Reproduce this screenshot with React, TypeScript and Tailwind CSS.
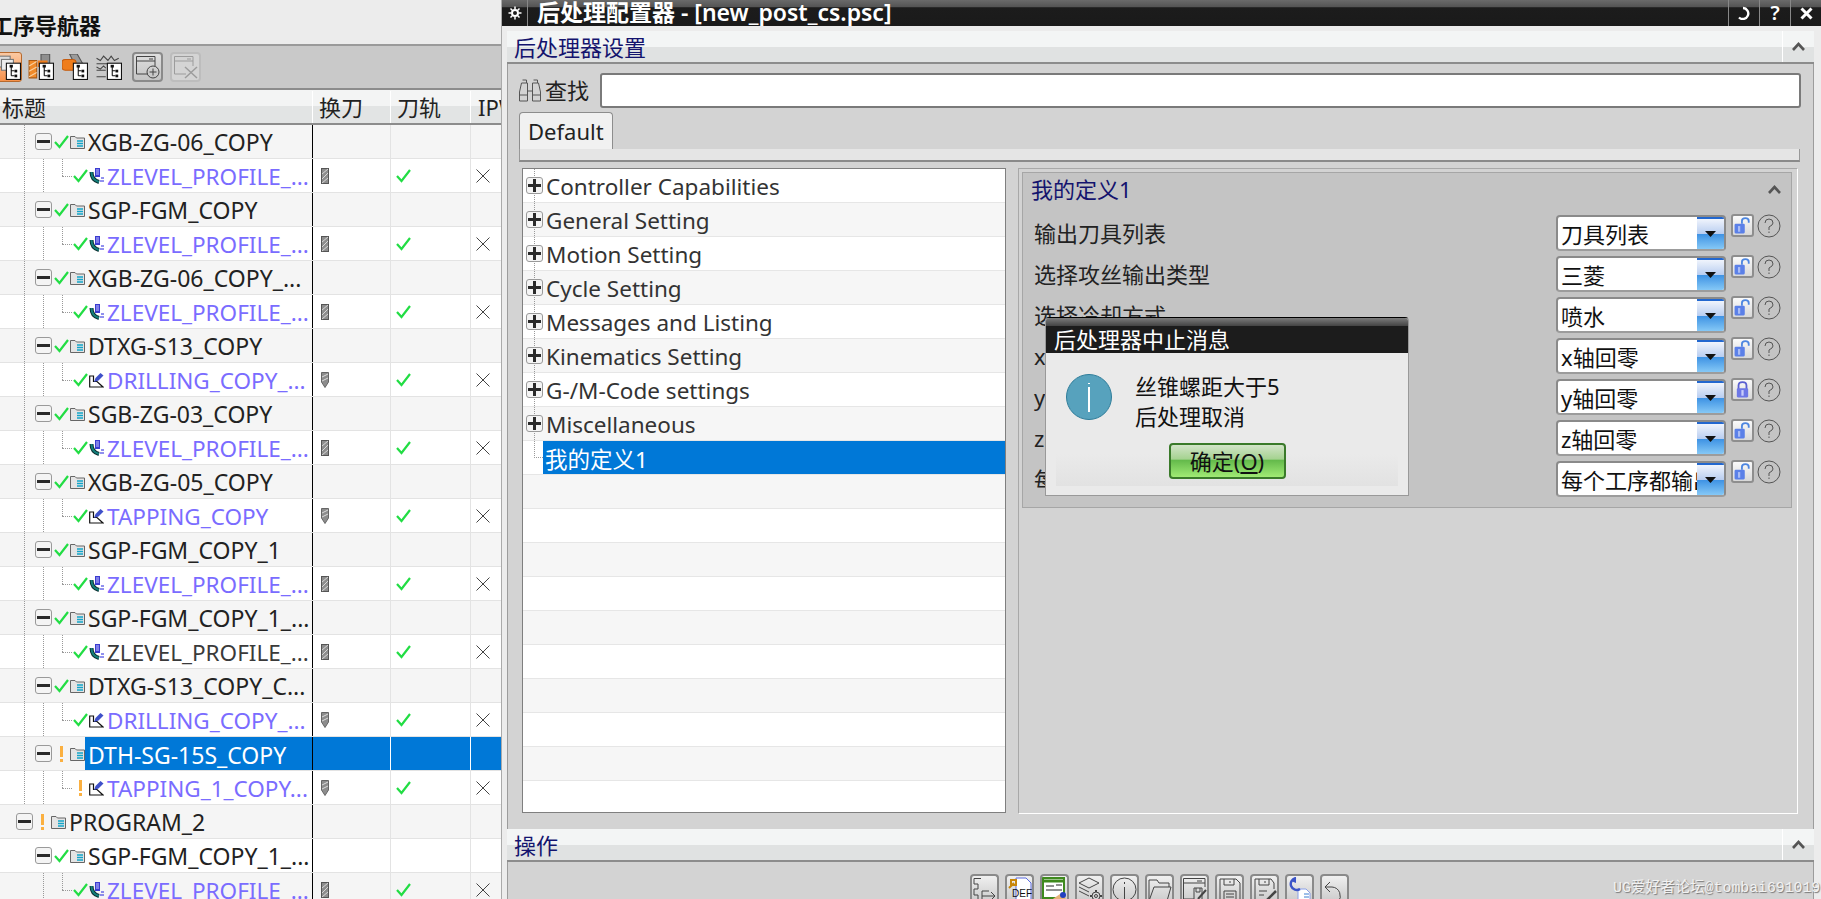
import type { ReactNode } from 'react';

const FONT = "font-['Noto_Sans','Noto_Sans_CJK_SC',sans-serif]";

type Row = {
  label: string;
  kind: 'group' | 'op' | 'root';
  op?: 'mill' | 'drill';
  status?: 'ok' | 'warn';
  dark?: boolean;
  selected?: boolean;
};

const navRows: Row[] = [
  { label: 'XGB-ZG-06_COPY', kind: 'group' },
  { label: 'ZLEVEL_PROFILE_...', kind: 'op', op: 'mill' },
  { label: 'SGP-FGM_COPY', kind: 'group' },
  { label: 'ZLEVEL_PROFILE_...', kind: 'op', op: 'mill' },
  { label: 'XGB-ZG-06_COPY_...', kind: 'group' },
  { label: 'ZLEVEL_PROFILE_...', kind: 'op', op: 'mill' },
  { label: 'DTXG-S13_COPY', kind: 'group' },
  { label: 'DRILLING_COPY_...', kind: 'op', op: 'drill' },
  { label: 'SGB-ZG-03_COPY', kind: 'group' },
  { label: 'ZLEVEL_PROFILE_...', kind: 'op', op: 'mill' },
  { label: 'XGB-ZG-05_COPY', kind: 'group' },
  { label: 'TAPPING_COPY', kind: 'op', op: 'drill' },
  { label: 'SGP-FGM_COPY_1', kind: 'group' },
  { label: 'ZLEVEL_PROFILE_...', kind: 'op', op: 'mill' },
  { label: 'SGP-FGM_COPY_1_...', kind: 'group' },
  { label: 'ZLEVEL_PROFILE_...', kind: 'op', op: 'mill', dark: true },
  { label: 'DTXG-S13_COPY_C...', kind: 'group' },
  { label: 'DRILLING_COPY_...', kind: 'op', op: 'drill' },
  { label: 'DTH-SG-15S_COPY', kind: 'group', status: 'warn', selected: true },
  { label: 'TAPPING_1_COPY...', kind: 'op', op: 'drill', status: 'warn' },
  { label: 'PROGRAM_2', kind: 'root', status: 'warn' },
  { label: 'SGP-FGM_COPY_1_...', kind: 'group' },
  { label: 'ZLEVEL_PROFILE_...', kind: 'op', op: 'mill' },
];

const treeItems = [
  'Controller Capabilities',
  'General Setting',
  'Motion Setting',
  'Cycle Setting',
  'Messages and Listing',
  'Kinematics Setting',
  'G-/M-Code settings',
  'Miscellaneous',
];

const settings = [
  { label: '输出刀具列表', value: '刀具列表' },
  { label: '选择攻丝输出类型', value: '三菱' },
  { label: '选择冷却方式', value: '喷水' },
  { label: 'x轴回零方式', value: 'x轴回零' },
  { label: 'y轴回零方式', value: 'y轴回零', locked: true },
  { label: 'z轴回零方式', value: 'z轴回零' },
  { label: '每个工序输出', value: '每个工序都输出' },
];

function Check({ size = 15 }: { size?: number }) {
  return (
    <svg width={size} height={size} viewBox="0 0 15 15" className="shrink-0">
      <path d="M1 8 L5.5 13 L14 2" fill="none" stroke="#22dd44" strokeWidth="2.2" />
    </svg>
  );
}

function Status({ status }: { status?: 'ok' | 'warn' }) {
  if (status === 'warn') {
    return (
      <span className="flex w-[15px] shrink-0 justify-center">
        <span className="flex flex-col items-center gap-[2px]">
          <span className="h-[11px] w-[3px] bg-[#fbb040]" />
          <span className="h-[3px] w-[3px] bg-[#fbb040]" />
        </span>
      </span>
    );
  }
  return <Check />;
}

function Toggle({ plus }: { plus?: boolean }) {
  return (
    <span className="relative flex h-[17px] w-[17px] shrink-0 items-center justify-center rounded-[3px] border border-[#9a9a9a] bg-[#f4f4f4]">
      <span className="h-[3px] w-[13px] bg-[#2a2a2a]" />
      {plus ? <span className="absolute h-[13px] w-[3px] bg-[#2a2a2a]" /> : null}
    </span>
  );
}

function FolderIcon() {
  return (
    <svg width="15" height="14" viewBox="0 0 15 14" className="shrink-0">
      <path d="M0.5 1.5 H5 L6.5 3 H14.5 V13.5 H0.5 Z" fill="#e4e4e4" stroke="#666" />
      <path d="M7 6 H13 M7 8.5 H13 M7 11 H13" stroke="#12a5c9" strokeWidth="1.6" />
    </svg>
  );
}

function MillOpIcon() {
  return (
    <svg width="15" height="16" viewBox="0 0 15 16" className="shrink-0">
      <path d="M2.5 4 Q2.5 12 10 14" fill="none" stroke="#0c2f30" strokeWidth="4" />
      <path d="M2.5 4 Q2.5 12 10 14" fill="none" stroke="#13807c" strokeWidth="2" />
      <rect x="6" y="0" width="5" height="9" fill="#3b3bd0" />
      <path d="M7 2 H10 M7 4 H10 M7 6 H10" stroke="#c4c4ff" />
      <path d="M11 13 H15 M12 10 H15" stroke="#2222dd" />
    </svg>
  );
}

function DrillOpIcon() {
  return (
    <svg width="15" height="16" viewBox="0 0 15 16" className="shrink-0">
      <path d="M0.7 4 V15 H14 L8 9.5 H4.5 L4.5 4 Z" fill="#fff" stroke="#111" strokeWidth="1.2" />
      <path d="M5 10 L6.5 6 L11.5 1 L14.5 3.5 L9.5 8.5 Z" fill="#3f51c9" />
    </svg>
  );
}

function ToolIcon({ op }: { op?: 'mill' | 'drill' }) {
  if (op === 'drill') {
    return (
      <svg width="8" height="16" viewBox="0 0 8 16">
        <path d="M0.5 0.5 H7.5 V10 L4 15.5 L0.5 10 Z" fill="#8d8d8d" stroke="#666" />
        <path d="M1 5 L7 2 M1 9 L7 6" stroke="#ddd" />
      </svg>
    );
  }
  return (
    <svg width="8" height="16" viewBox="0 0 8 16">
      <rect x="0.5" y="0.5" width="7" height="15" fill="#8d8d8d" stroke="#555" />
      <path d="M1 6 L7 1 M1 11 L7 5 M1 15 L7 10" stroke="#d8d8d8" />
    </svg>
  );
}

function CrossMark() {
  return (
    <svg width="14" height="14" viewBox="0 0 14 14">
      <path d="M0.5 0.5 L13.5 13.5 M13.5 0.5 L0.5 13.5" stroke="#444" />
    </svg>
  );
}

function NavRow({ row, index }: { row: Row; index: number }) {
  const bg = index % 2 === 0 ? 'bg-[#f5f5f5]' : 'bg-white';
  const status = row.status ?? 'ok';
  const isOp = row.kind === 'op';
  const textColor = isOp ? (row.dark ? 'text-[#3a3a3a]' : 'text-[#7a6cff]') : 'text-[#222]';
  return (
    <div className={`flex h-[34px] border-b border-[#e3e3e3] leading-[33px] ${isOp ? 'text-[22.5px]' : 'text-[23px]'} ${bg} ${row.selected ? 'text-white' : ''}`}>
      <div className={`relative flex w-[313px] shrink-0 items-center border-r border-black ${isOp ? 'pl-[73px]' : row.kind === 'root' ? 'pl-[16px]' : 'pl-[35px]'}`}>
        {index < 20 ? <span className="absolute left-[24px] top-0 h-full border-l border-dotted border-[#999]" /> : null}
        {index !== 20 && !(row.kind === 'group') ? <span className="absolute left-[43px] top-0 h-full border-l border-dotted border-[#999]" /> : null}
        {isOp ? (
          <>
            <span className="absolute left-[62px] top-0 h-[17px] border-l border-dotted border-[#999]" />
            <span className="absolute left-[62px] top-[17px] w-[10px] border-t border-dotted border-[#999]" />
          </>
        ) : null}
        {!isOp ? <span className="relative"><Toggle /></span> : null}
        <span className={`flex items-center ${isOp ? 'gap-[1px]' : 'ml-[2px] gap-[1px]'}`}>
          <Status status={status} />
          {row.kind !== 'op' ? <FolderIcon /> : row.op === 'mill' ? <MillOpIcon /> : <DrillOpIcon />}
        </span>
        <span className={`ml-[3px] whitespace-nowrap pt-[2px] ${textColor}`}>{row.label}</span>
        {row.selected ? (
          <span className="absolute bottom-0 left-[85px] right-0 top-0 bg-[#0078d7] pl-[3px] pt-[2px] text-white">{row.label}</span>
        ) : null}
      </div>
      <div className={`flex w-[78px] shrink-0 items-center border-r pl-[8px] ${row.selected ? 'border-white bg-[#0078d7]' : 'border-[#e3e3e3]'}`}>
        {isOp ? <ToolIcon op={row.op} /> : null}
      </div>
      <div className={`flex w-[80px] shrink-0 items-center border-r pl-[5px] ${row.selected ? 'border-white bg-[#0078d7]' : 'border-[#e3e3e3]'}`}>
        {isOp ? <Check /> : null}
      </div>
      <div className={`flex flex-1 items-center pl-[5px] ${row.selected ? 'bg-[#0078d7]' : ''}`}>
        {isOp ? <CrossMark /> : null}
      </div>
    </div>
  );
}

function TreeGlyph() {
  return (
    <g>
      <rect x="10.5" y="8.5" width="13" height="15" fill="#fff" stroke="#111" />
      <path d="M15 11 V20 M15 15.5 H18 M15 20 H18" stroke="#111" />
      <rect x="13.5" y="10" width="3" height="2.5" fill="#111" />
      <rect x="18" y="14.5" width="2.5" height="2.5" fill="#111" />
      <rect x="18" y="19" width="2.5" height="2.5" fill="#111" />
    </g>
  );
}

function NavToolbar() {
  return (
    <div className="flex h-[44px] items-center border-b-2 border-[#8c8c8c] bg-[#c9c9c9]">
      <span className="relative -ml-[8px] flex h-[30px] w-[30px] items-center justify-end rounded-[3px] border border-[#b76a2e] bg-gradient-to-b from-[#fbc9a2] to-[#f6914a]">
        <svg width="26" height="26" viewBox="0 0 24 24">
          <rect x="3" y="2" width="11" height="10" fill="#ddd" stroke="#777" />
          <rect x="6" y="5" width="11" height="10" fill="#eee" stroke="#777" />
          <TreeGlyph />
        </svg>
      </span>
      <svg width="26" height="26" viewBox="0 0 24 24" className="ml-[6px]">
        <rect x="12" y="0" width="8" height="9" fill="#8f8f8f" stroke="#555" />
        <rect x="9" y="6" width="9" height="6" fill="#ef7d1c" />
        <path d="M1 6 H8 V22 H1 Z" fill="#ef8a2a" stroke="#a85a14" />
        <path d="M1 11 L8 7 M1 16 L8 12 M1 21 L8 17" stroke="#f8d0a0" />
        <TreeGlyph />
      </svg>
      <svg width="26" height="26" viewBox="0 0 24 24" className="ml-[8px]">
        <path d="M7 0 H14 L22 14 H14 Z" fill="#9b9b9b" stroke="#555" />
        <rect x="0" y="5" width="13" height="10" rx="3" fill="#ef7d1c" stroke="#c45c10" />
        <TreeGlyph />
      </svg>
      <svg width="26" height="26" viewBox="0 0 24 24" fill="none" className="ml-[8px]">
        <path d="M0.5 9 H21 M0.5 15 H9 M0.5 21 H9" stroke="#444" />
        <path d="M0.5 4 L4 6 L7 2 L11 6 L14 2 L17 6 L21 4" stroke="#444" />
        <path d="M0.5 12 L4 14 L7 11 L9 13" stroke="#444" />
        <TreeGlyph />
      </svg>
      <span className="ml-[10px] flex h-[30px] w-[31px] items-center justify-center rounded-[4px] border-2 border-[#8a8a8a] bg-gradient-to-b from-[#dedede] to-[#c4c4c4]">
        <svg width="25" height="24" viewBox="0 0 25 24" fill="none" stroke="#444">
          <path d="M13 19 H1.5 V1.5 H20 V11 M1.5 6 H20 M14 4 H18" />
          <circle cx="18" cy="17" r="6" />
          <path d="M18 13.5 V20.5 M14.5 17 H21.5" />
        </svg>
      </span>
      <span className="ml-[7px] flex h-[30px] w-[31px] items-center justify-center rounded-[4px] border-2 border-[#bdbdbd] bg-[#d4d4d4]">
        <svg width="25" height="24" viewBox="0 0 25 24" fill="none" stroke="#9c9c9c">
          <path d="M13 19 H1.5 V1.5 H20 V11 M1.5 6 H20 M14 4 H18" />
          <path d="M12 12 L24 23 M24 12 L12 23" strokeWidth="1.5" />
        </svg>
      </span>
    </div>
  );
}

function Navigator() {
  return (
    <div className="flex h-full w-[501px] shrink-0 flex-col overflow-hidden bg-white">
      <div className="flex h-[46px] shrink-0 items-center border-b-2 border-[#9a9a9a] bg-[#ececec] pt-[5px]">
        <span className="-ml-[9px] text-[22px] font-bold leading-[30px] text-[#111]">工序导航器</span>
      </div>
      <NavToolbar />
      <div className="flex h-[35px] shrink-0 border-b-2 border-[#8c8c8c] bg-[linear-gradient(#f3f4f4_0_50%,#e2e4e4_50%_100%)] pt-[1px] text-[22px] leading-[33px] text-[#222]">
        <div className="w-[313px] border-r border-white pl-[2px]">标题</div>
        <div className="w-[78px] border-r border-white pl-[6px]">换刀</div>
        <div className="w-[80px] border-r border-white pl-[6px]">刀轨</div>
        <div className="flex-1 overflow-hidden whitespace-nowrap pl-[7px]">IPW</div>
      </div>
      <div className="min-h-0 flex-1 overflow-hidden">
        {navRows.map((row, index) => (
          <NavRow key={index} row={row} index={index} />
        ))}
      </div>
    </div>
  );
}

function SectionBar({ title }: { title: string }) {
  return (
    <div className="flex h-[33px] shrink-0 items-stretch border-b-2 border-[#8c8c8c] bg-[linear-gradient(#f3f5f5_0_52%,#e0e2e2_52%_100%)]">
      <div className="flex-1 pl-[7px] text-[22px] leading-[33px] text-[#14146e]">{title}</div>
      <div className="flex w-[32px] items-center justify-center border-l border-white">
        <Caret />
      </div>
    </div>
  );
}

function Caret() {
  return (
    <svg width="13" height="9" viewBox="0 0 13 9">
      <path d="M1 8 L6.5 2 L12 8" fill="none" stroke="#555" strokeWidth="2.6" />
    </svg>
  );
}

function SettingTree() {
  const rows = Array.from({ length: 19 });
  return (
    <div className="h-[645px] w-[484px] shrink-0 overflow-hidden border border-[#7f7f7f] bg-white text-[22.5px] text-[#333]">
      {rows.map((_, i) => {
        const label = treeItems[i];
        const selected = i === 8;
        return (
          <div key={i} className={`relative flex h-[34px] items-center border-b border-[#e6e6e6] pl-[3px] leading-[33px] ${i % 2 === 1 ? 'bg-[#f6f6f6]' : 'bg-white'}`}>
            {i < 8 ? <span className="absolute left-[11px] top-0 h-full border-l border-dotted border-[#999]" /> : null}
            {label ? (
              <>
                <span className="relative"><Toggle plus /></span>
                <span className="ml-[3px] whitespace-nowrap pt-[2px]">{label}</span>
              </>
            ) : null}
            {selected ? (
              <>
                <span className="absolute left-[11px] top-0 h-[17px] w-[9px] border-b border-l border-dotted border-[#999]" />
                <span className="absolute bottom-0 left-[20px] right-0 top-0 bg-[#0078d7] pl-[2px] pt-[2px] text-white">我的定义1</span>
              </>
            ) : null}
          </div>
        );
      })}
    </div>
  );
}

function LockIcon({ locked }: { locked?: boolean }) {
  return (
    <span className="flex h-[23px] w-[23px] items-center justify-center rounded-[3px] border-2 border-[#8e8e8e] bg-gradient-to-b from-[#fafafa] to-[#d8d8d8]">
      <svg width="17" height="17" viewBox="0 0 15 15" fill="none">
        {locked ? (
          <>
            <path d="M4 7 V4 Q4 1 7.5 1 Q11 1 11 4 V7" stroke="#5a5fd0" strokeWidth="1.6" />
            <rect x="2.5" y="6.5" width="10" height="8" rx="1" fill="#6e78e6" />
            <rect x="6.5" y="8" width="2" height="5" fill="#c9cdfa" />
          </>
        ) : (
          <>
            <path d="M7 6 V3.5 Q7 1 10 1 Q13 1 13 3.5 V5" stroke="#4d86e0" strokeWidth="1.6" />
            <rect x="0.5" y="6" width="9" height="8.5" rx="1" fill="#5b80e8" />
            <rect x="3.5" y="8" width="2" height="5" fill="#a9bcf6" />
          </>
        )}
      </svg>
    </span>
  );
}

function SettingRow({ label, value, locked }: { label: string; value: string; locked?: boolean }) {
  return (
    <div className="flex h-[36px] items-start">
      <div className="flex-1 self-center whitespace-nowrap pl-[11px] text-[22px] text-[#222]">{label}</div>
      <div className="flex h-[36px] w-[170px] overflow-hidden rounded-[4px] border-2 border-[#8a8a8a] border-b-[#9c9c9c] bg-white">
        <div className="min-w-0 flex-1 overflow-hidden whitespace-nowrap pl-[3px] text-[22px] leading-[34px] text-[#111]">{value}</div>
        <div className="flex w-[27px] shrink-0 items-center justify-center border-t-2 border-[#2267cf] bg-[linear-gradient(#f0f4fc_0,#b8cdf0_50%,#3f93e4_51%,#85c8f6_100%)]">
          <svg width="11" height="8" viewBox="0 0 11 8">
            <path d="M0 1 H11 L5.5 7 Z" fill="#111" />
          </svg>
        </div>
      </div>
      <div className="-mt-[1px] ml-[5px]"><LockIcon locked={locked} /></div>
      <svg width="24" height="24" viewBox="0 0 24 24" className="-mt-[1px] ml-[3px] mr-[10px] shrink-0" fill="none">
        <circle cx="12" cy="12" r="11" stroke="#555" />
        <path d="M8 9 Q8 5 12 5 Q16 5 16 9 Q16 11 12 13 V16" stroke="#555" />
        <path d="M12 17.5 V19" stroke="#555" />
      </svg>
    </div>
  );
}

function SettingsPanel() {
  return (
    <div className="ml-[12px] h-[646px] w-[780px] shrink-0 border border-white border-l-[#a8a8a8] border-t-[#a8a8a8] pl-[3px] pt-[3px]">
      <div className="h-[336px] w-[770px] border border-[#a6a6a6] bg-[#c4c4c4]">
        <div className="flex h-[42px] items-center justify-between pb-[10px] pr-[10px]">
          <span className="pl-[8px] text-[22px] text-[#14146e]">我的定义1</span>
          <Caret />
        </div>
        <div className="flex flex-col gap-[5px]">
          {settings.map((s) => (
            <SettingRow key={s.label} {...s} />
          ))}
        </div>
      </div>
    </div>
  );
}

function ActionButton({ children }: { children: ReactNode }) {
  return (
    <span className="flex h-[29px] w-[29px] items-start justify-center overflow-hidden rounded-[4px] border-2 border-b-0 border-[#8a8a8a] bg-gradient-to-b from-[#f0f0f0] to-[#c9c9c9] pt-[1px]">
      {children}
    </span>
  );
}

function ActionIcons() {
  const s = { width: 25, height: 25, viewBox: '0 0 25 25', fill: 'none', stroke: '#444' };
  return (
    <div className="flex justify-center gap-[6px] pr-[2px] pt-[12px]">
      <ActionButton><svg {...s}><path d="M9 1.5 H2 V7 H6 V12 H2 V18 H6 V24 H2 M10 19 H23 M19 15 L23 19 L19 23" /><path d="M10 14 H17 M10 14 V24" /></svg></ActionButton>
      <ActionButton><svg {...s}><path d="M9 1 H19 L24 6 V24 H9 Z" fill="#fff" stroke="#5a6ae0" /><path d="M2 11 L7 6 M4 3 L9 3 L9 8 L4 8 Z" stroke="#c8860a" strokeWidth="2" /><text x="5" y="20" fontSize="10" fill="#111" stroke="none" fontFamily="Liberation Sans">DEF</text></svg></ActionButton>
      <ActionButton><svg {...s}><rect x="1" y="1" width="21" height="20" fill="#fff" stroke="#3f8a1e" strokeWidth="2" /><path d="M1 4 H22" stroke="#3f8a1e" strokeWidth="3" /><path d="M4 9 H12 M14 8 H20 M4 13 H20" stroke="#222" /><path d="M8 24 L18 17 L24 21 L20 25 Z" fill="#e8b27a" stroke="none" /><circle cx="21" cy="18" r="3" fill="#2340c0" stroke="none" /></svg></ActionButton>
      <ActionButton><svg {...s}><path d="M12 1 L22 6 L12 11 L2 6 Z M2 10 L12 15 M2 14 L12 19" /><circle cx="19" cy="19" r="4" /><circle cx="19" cy="19" r="1.5" /><path d="M19 13 V15 M19 23 V25 M13 19 H15 M23 19 H25" strokeWidth="2" /></svg></ActionButton>
      <ActionButton><svg {...s}><circle cx="12.5" cy="12.5" r="11.5" /><path d="M12.5 10 V22 M12.5 5 V7" /></svg></ActionButton>
      <ActionButton><svg {...s}><path d="M2 24 V3 H10 L12 6 H22 V10 M2 24 H20 L24 10 H7 L2 24" /></svg></ActionButton>
      <ActionButton><svg {...s}><path d="M12 22 H1.5 V1.5 H23 V10 M1.5 6 H23 M15 4 H20" /><path d="M12 11 H20 V24 H12 Z M14 11 V15 H18 V11" /><path d="M16 22 L24 13" strokeWidth="2" /></svg></ActionButton>
      <ActionButton><svg {...s}><path d="M3 2 H19 L23 6 V24 H3 Z M7 2 V8 H17 V2 M13 4 V6 M7 24 V14 H19 V24 M9 17 H17 M9 20 H17" /></svg></ActionButton>
      <ActionButton><svg {...s}><path d="M3 2 H19 L22 6 V12 M13 24 H3 V2 M7 2 V8 H17 V2 M13 4 V6 M7 14 H15 M7 18 H12" /><path d="M15 23 L24 14" strokeWidth="2.5" /></svg></ActionButton>
      <ActionButton><svg {...s}><path d="M11 12 H19 L23 16 V25 H11 Z" fill="#fff" stroke="#8aa0e8" /><path d="M9 1 A6 6 0 1 0 13 12" stroke="#3d55c8" strokeWidth="2.4" /><path d="M9 0 V6 L4 4 Z" fill="#3d55c8" stroke="none" /><path d="M17 17 H22 M17 20 H22 M17 23 H22" stroke="#3d7fd0" /></svg></ActionButton>
      <ActionButton><svg {...s}><path d="M8 5 L3 10 L8 15" /><path d="M3 10 H10 A9 9 0 0 1 16 25" /></svg></ActionButton>
    </div>
  );
}

function InfoDialog() {
  return (
    <div className="absolute left-[1045px] top-[317px] h-[179px] w-[364px] overflow-hidden rounded-t-[4px] border border-[#999] border-t-black bg-[#eaeaea]">
      <div className="h-[8px] bg-gradient-to-b from-[#7c7c7c] to-[#444]" />
      <div className="h-[27px] bg-[#1c1c1c] pl-[8px] text-[22px] leading-[27px] text-white">后处理器中止消息</div>
      <div className="flex pl-[20px] pt-[21px]">
        <span className="relative flex h-[46px] w-[46px] items-center justify-center rounded-full border border-[#2f7d9a] bg-[#57a2bd]">
          <span className="absolute top-[8px] h-[1px] w-[2px] bg-white" />
          <span className="mt-[4px] h-[25px] w-[2px] bg-white" />
        </span>
        <div className="-mt-[3px] ml-[23px] text-[22px] leading-[30px] text-[#111]">
          <div>丝锥螺距大于5</div>
          <div>后处理取消</div>
        </div>
      </div>
      <div className="mx-[10px] mt-[23px] flex h-[32px] justify-center bg-gradient-to-b from-[#eaeaea] to-[#e2e2e2]">
        <div className="-mt-[11px] flex h-[36px] w-[117px] items-center justify-center rounded-[4px] border-2 border-[#3a7a2a] bg-[linear-gradient(#d2e4c8_0,#a4d28f_45%,#62b84a_46%,#a0ea74_100%)] text-[22px] text-[#111]">
          确定(<span className="underline">O</span>)
        </div>
      </div>
    </div>
  );
}

function ConfigWindow() {
  return (
    <div className="flex h-full min-w-0 flex-1 flex-col border-l border-[#aaa] bg-[#ececec]">
      <div className="flex h-[26px] shrink-0 bg-[linear-gradient(#6a6a6a_0,#555_25%,#1c1c1c_30%,#1a1a1a_100%)] text-white">
        <div className="flex w-[26px] items-center justify-center border-r border-[#888]">
          <svg width="14" height="14" viewBox="0 0 14 14" fill="none" stroke="#fff">
            <circle cx="7" cy="7" r="3" strokeWidth="2" />
            <path d="M7 0.5 V3 M7 11 V13.5 M0.5 7 H3 M11 7 H13.5 M2.5 2.5 L4.2 4.2 M9.8 9.8 L11.5 11.5 M11.5 2.5 L9.8 4.2 M4.2 9.8 L2.5 11.5" strokeWidth="1.5" />
          </svg>
        </div>
        <div className="flex-1 overflow-hidden whitespace-nowrap pl-[9px] text-[23px] font-semibold leading-[24px]">后处理配置器 - [new_post_cs.psc]</div>
        <div className="flex w-[31px] items-center justify-center border-l border-[#888]">
          <svg width="14" height="14" viewBox="0 0 14 14" fill="none">
            <path d="M2 11.5 A5.5 5.5 0 1 0 6 2" stroke="#fff" strokeWidth="2.4" />
          </svg>
        </div>
        <div className="flex w-[31px] items-center justify-center border-l border-[#888] text-[20px] font-semibold leading-none">?</div>
        <div className="flex w-[31px] items-center justify-center border-l border-[#888]">
          <svg width="13" height="13" viewBox="0 0 13 13">
            <path d="M1.5 1.5 L11.5 11.5 M11.5 1.5 L1.5 11.5" stroke="#fff" strokeWidth="3" />
          </svg>
        </div>
      </div>
      <div className="flex min-h-0 flex-1 flex-col pl-[5px] pr-[7px] pt-[5px]">
        <SectionBar title="后处理器设置" />
        <div className="flex h-[765px] shrink-0 flex-col border-x border-[#9c9c9c] bg-[#d3d3d3] pl-[10px] pt-[9px]">
          <div className="flex h-[35px] items-center">
            <svg width="24" height="24" viewBox="0 0 23 24" fill="none" stroke="#555" className="shrink-0">
              <path d="M1 22 V13 L3 4 H9 V22 Z M22 22 V13 L20 4 H14 V22 Z M9 12 H14 M1 16 H9 M14 16 H22 M4 1 H8 V4 M15 1 H19 V4" />
            </svg>
            <span className="ml-[3px] w-[44px] shrink-0 whitespace-nowrap text-[22px] text-[#222]">查找</span>
            <div className="ml-[11px] mr-[12px] h-[35px] flex-1 rounded-[3px] border-2 border-[#7a7a7a] bg-white" />
          </div>
          <div className="ml-[1px] mr-[13px] mt-[4px] flex h-[50px] flex-col">
            <div className="h-[38px] w-[94px] rounded-t-[4px] border border-b-0 border-[#8d8d8d] bg-[#f1f1f1] pl-[8px] text-[22px] leading-[36px] text-[#222]">Default</div>
            <div className="h-[13px] border-x border-b-2 border-x-[#999] border-b-[#8a8a8a] bg-[#e5e5e5]" />
          </div>
          <div className="mt-[6px] flex pl-[4px]">
            <SettingTree />
            <SettingsPanel />
          </div>
        </div>
        <SectionBar title="操作" />
        <div className="min-h-0 flex-1 overflow-hidden border-x border-[#9c9c9c] bg-[#d3d3d3]">
          <ActionIcons />
        </div>
      </div>
    </div>
  );
}

export default function App() {
  return (
    <div className={`relative flex h-[899px] w-[1821px] overflow-hidden ${FONT}`}>
      <Navigator />
      <ConfigWindow />
      <InfoDialog />
      <div className="absolute bottom-0 left-[1613px] whitespace-nowrap font-['Liberation_Mono','Noto_Sans_CJK_SC',monospace] text-[14.8px] text-[#f2f2f2] [text-shadow:1px_1px_1px_#777]">
        UG爱好者论坛@tombai691019
      </div>
    </div>
  );
}
